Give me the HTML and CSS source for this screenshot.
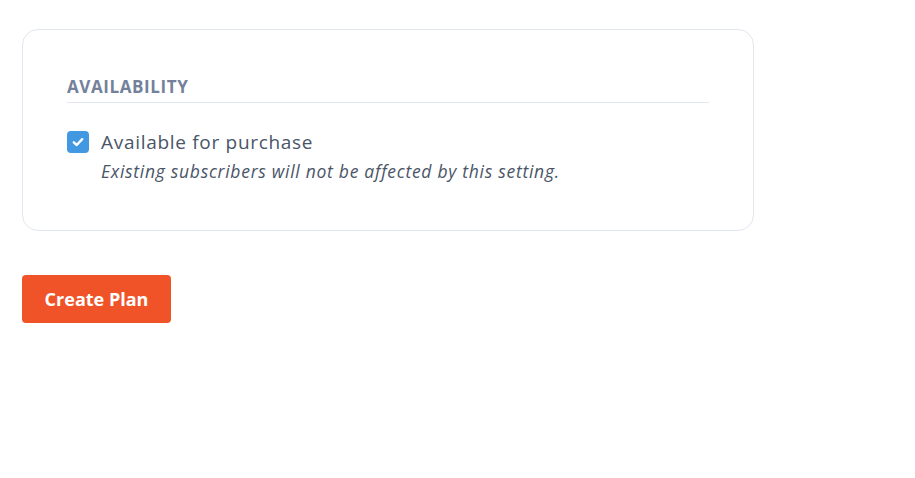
FILE: index.html
```html
<!DOCTYPE html>
<html lang="en">
<head>
  <meta charset="UTF-8">
  <meta name="viewport" content="width=device-width, initial-scale=1.0">
  <title>Create Plan</title>
  <link rel="stylesheet" href="styles.css">
</head>
<body>
  <div class="page">
    <div class="panel">
      <h2 class="panel-title">Availability</h2>
      <label class="option">
        <span class="checkbox">
          <svg width="16" height="16" viewBox="0 0 16 16"><path d="M3.8 8.3 L6.7 11 L12.2 5.2" fill="none" stroke="#fff" stroke-width="2.4" stroke-linecap="round" stroke-linejoin="round"/></svg>
        </span>
        <span class="option-text">
          <span class="option-label">Available for purchase</span>
          <span class="option-hint">Existing subscribers will not be affected by this setting.</span>
        </span>
      </label>
    </div>
    <button class="btn-primary">Create Plan</button>
  </div>
</body>
</html>
```

FILE: styles.css
```css
body {
  margin: 0;
  font-family: "Open Sans", "Liberation Sans", sans-serif;
  background: #fff;
  color: #4a5568;
}
.page {
  padding: 29px 22px;
}
.panel {
  width: 732px;
  box-sizing: border-box;
  border: 1px solid #e2e6ef;
  border-radius: 16px;
  padding: 46px 44px 47px;
}
.panel-title {
  margin: 0 0 28px;
  padding-bottom: 4px;
  border-bottom: 1px solid #e2e6ef;
  font-size: 17px;
  line-height: 22px;
  font-weight: 700;
  text-transform: uppercase;
  letter-spacing: 0.6px;
  color: #74819a;
}
.option {
  display: flex;
  align-items: flex-start;
  gap: 12px;
}
.checkbox {
  width: 22px;
  height: 22px;
  border-radius: 4px;
  background: #4299e1;
  display: flex;
  align-items: center;
  justify-content: center;
  flex-shrink: 0;
}
.option-text {
  display: flex;
  flex-direction: column;
}
.option-label {
  font-size: 19px;
  line-height: 22px;
  letter-spacing: 0.7px;
  color: #4a5568;
}
.option-hint {
  margin-top: 6px;
  font-size: 17.5px;
  letter-spacing: 0.72px;
  font-style: italic;
  color: #4a5568;
}
.btn-primary {
  margin-top: 44px;
  width: 149px;
  height: 48px;
  border: none;
  border-radius: 4px;
  background: #f05328;
  color: #fff;
  font-family: inherit;
  font-size: 18px;
  font-weight: 700;
}
```
